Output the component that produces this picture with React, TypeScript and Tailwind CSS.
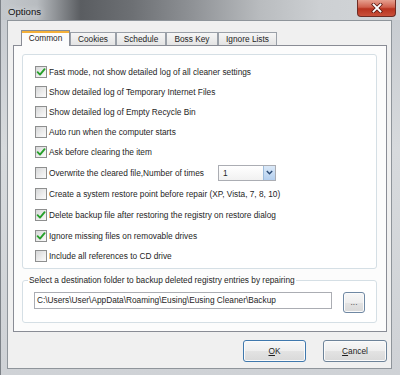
import React from "react";

function Check({ checked }: { checked?: boolean }) {
  return (
    <span className="flex h-[12px] w-[12px] shrink-0 items-center justify-center border border-[#8e8f8f] bg-white">
      <span className="flex h-[10px] w-[10px] items-center justify-center bg-[linear-gradient(135deg,#d6d7d8_0%,#eeeeee_60%,#fafafa_100%)]">
        {checked && (
          <svg width="10" height="10" viewBox="0 0 10 10">
            <path d="M1.6 5.2 L4 7.6 L8.6 2.2" fill="none" stroke="#27a02b" strokeWidth="1.9" strokeLinecap="round" strokeLinejoin="round" />
          </svg>
        )}
      </span>
    </span>
  );
}

function Row({ checked, label, h, children }: { checked?: boolean; label: string; h: string; children?: React.ReactNode }) {
  return (
    <div className={`flex items-center ${h}`}>
      <Check checked={checked} />
      <span className="ml-[2px] whitespace-nowrap leading-[10px]">{label}</span>
      {children}
    </div>
  );
}

function Tab({ label, w, selected }: { label: string; w: string; selected?: boolean }) {
  if (selected) {
    return (
      <div
        className={`relative z-10 -mb-px flex h-[16px] ${w} items-center justify-center border-x border-t border-[#898c95] bg-[#fcfcfc] pb-[1px] shadow-[inset_0_2px_0_#f3b03a]`}
      >
        {label}
      </div>
    );
  }
  return (
    <div
      className={`flex h-[13px] ${w} items-center justify-center border-x border-t border-[#9aa0a8] bg-[linear-gradient(#f6f6f6,#e4e4e4)]`}
    >
      {label}
    </div>
  );
}

function Btn({ children, w, h, border }: { children: React.ReactNode; w: string; h: string; border: string }) {
  return (
    <div
      className={`flex ${w} ${h} items-center justify-center rounded-[3px] border ${border} bg-[linear-gradient(#f7f7f7_0%,#eeeeee_50%,#e3e3e3_51%,#d9d9d9_100%)] shadow-[inset_0_0_0_1px_#fbfbfb]`}
    >
      {children}
    </div>
  );
}

export default function App() {
  return (
    <div className="relative flex h-[375px] w-[400px] flex-col overflow-hidden border-l border-[#7d8288] bg-[linear-gradient(#c6cacf,#d7dadd_40%,#cfd2d6)] font-['Liberation_Sans',Arial,sans-serif] text-[8.3px] text-[#1e1e1e]">
      {/* title bar */}
      <div className="flex h-[20px] shrink-0 items-center bg-[linear-gradient(to_right,#c4c8cc_0%,#b8bcc0_9%,#5a5d61_20%,#6d7074_33%,#8f9296_48%,#b9bcbf_65%,#cdd0d3_80%,#d2d5d8_100%)] pl-[7px] pt-[3px]">
        <span className="text-[9.6px] leading-[12px] text-[#111] [text-shadow:0_0_6px_#e8ecef]">Options</span>
      </div>
      <div className="absolute right-[4px] top-0 flex h-[17px] w-[39px] items-center justify-center rounded-b-[4px] border border-t-0 border-[#6e2c24] bg-[linear-gradient(#e6a08f_0%,#d0604d_45%,#b8331f_55%,#c9503a_100%)]">
        <svg width="12" height="10" viewBox="0 0 12 10">
          <path d="M2.5 1.5 L9.5 8.5 M9.5 1.5 L2.5 8.5" stroke="#5a1a12" strokeWidth="3.4" strokeLinecap="square" />
          <path d="M2.5 1.5 L9.5 8.5 M9.5 1.5 L2.5 8.5" stroke="#ffffff" strokeWidth="1.8" strokeLinecap="square" />
        </svg>
      </div>

      {/* frame + client */}
      <div className="flex flex-1 pl-[6px] pr-[8px] pb-[6px]">
        <div className="flex flex-1 flex-col border border-[#8f959b] bg-[#f0f0f0] pl-[5px] pr-[4px] pt-[10px]">
          {/* tabs */}
          <div className="flex h-[14px] items-end pl-[8px]">
            <Tab label="Common" w="w-[49px]" selected />
            <Tab label="Cookies" w="w-[46px]" />
            <Tab label="Schedule" w="w-[50px]" />
            <Tab label="Boss Key" w="w-[52px]" />
            <Tab label="Ignore Lists" w="w-[59px]" />
          </div>
          {/* panel */}
          <div className="flex h-[287px] flex-col border border-[#898c95] bg-[#fcfcfc] pl-[8px]">
            <div className="mt-[8px] flex h-[215px] w-[355px] flex-col rounded-[3px] border border-[#d5dfe5] bg-white pl-[12px] pt-[7px]">
              <Row checked label="Fast mode, not show detailed log of all cleaner settings" h="h-[20px]" />
              <Row label="Show detailed log of Temporary Internet Files" h="h-[20px]" />
              <Row label="Show detailed log of Empty Recycle Bin" h="h-[20px]" />
              <Row label="Auto run when the computer starts" h="h-[20px]" />
              <Row checked label="Ask before clearing the item" h="h-[20px]" />
              <Row label="Overwrite the cleared file,Number of times" h="h-[21px]">
                <div className="ml-[14px] flex h-[16px] w-[58px] border border-[#abadb3] bg-[linear-gradient(#ffffff,#f1f1f1)]">
                  <span className="flex-1 pl-[4px] leading-[14px]">1</span>
                  <span className="flex w-[12px] items-center justify-center border-l border-[#9cbcdc] bg-[linear-gradient(#dbe9f8,#b4cfee)]">
                    <svg width="7" height="5" viewBox="0 0 7 5">
                      <path d="M0.8 1 L3.5 3.8 L6.2 1" fill="none" stroke="#2a4a74" strokeWidth="1.4" />
                    </svg>
                  </span>
                </div>
              </Row>
              <Row label="Create a system restore point before repair (XP, Vista, 7, 8, 10)" h="h-[21px]" />
              <Row checked label="Delete backup file after restoring the registry on restore dialog" h="h-[21px]" />
              <Row checked label="Ignore missing files on removable drives" h="h-[21px]" />
              <Row label="Include all references to CD drive" h="h-[20px]" />
            </div>
            <fieldset className="mt-[6px] h-[48px] w-[355px] rounded-[3px] border border-[#d5dfe5] bg-white pl-[11px] pt-[7px]">
              <legend className="ml-[-6px] px-[1px] leading-[10px]">
                Select a destination folder to backup deleted registry entries by repairing
              </legend>
              <div className="flex items-start">
                <div className="h-[17px] w-[298px] border border-[#abadb3] bg-white pl-[2px] leading-[15px]">
                  C:\Users\User\AppData\Roaming\Eusing\Eusing Cleaner\Backup
                </div>
                <div className="ml-[11px]">
                  <Btn w="w-[22px]" h="h-[21px]" border="border-[#6f88a3]">
                    <span className="text-[#555]">...</span>
                  </Btn>
                </div>
              </div>
            </fieldset>
          </div>
          {/* buttons */}
          <div className="mt-[8px] flex justify-end gap-[17px]">
            <Btn w="w-[63px]" h="h-[22px]" border="border-[#3f78ad]">
              <span>
                <span className="underline">O</span>K
              </span>
            </Btn>
            <Btn w="w-[64px]" h="h-[22px]" border="border-[#6d8399]">
              <span>
                <span className="underline">C</span>ancel
              </span>
            </Btn>
          </div>
        </div>
      </div>
    </div>
  );
}
